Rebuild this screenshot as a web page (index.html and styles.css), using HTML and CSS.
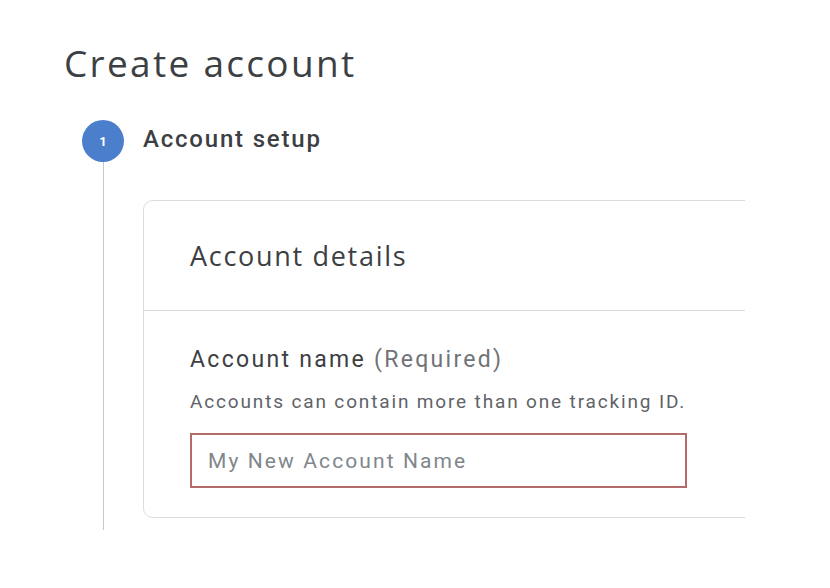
FILE: index.html
```html
<!DOCTYPE html>
<html lang="en">
<head>
<meta charset="utf-8">
<title>Create account</title>
<link rel="stylesheet" href="styles.css">
</head>
<body>
<main class="page">
  <h1 class="title">Create account</h1>
  <section class="step">
    <div class="rail">
      <div class="step-num">1</div>
      <div class="rail-line"></div>
    </div>
    <div class="step-body">
      <h2 class="step-label">Account setup</h2>
      <div class="card-clip">
        <div class="card">
          <div class="card-head">
            <h3 class="card-title">Account details</h3>
          </div>
          <div class="card-body">
            <label class="field-label" for="acct">Account name <span class="req">(Required)</span></label>
            <p class="field-help">Accounts can contain more than one tracking ID.</p>
            <input class="field-input" id="acct" type="text" placeholder="My New Account Name">
          </div>
        </div>
      </div>
    </div>
  </section>
</main>
</body>
</html>
```

FILE: styles.css
```css
* { box-sizing: border-box; }
html, body { margin: 0; padding: 0; background: #fff; }
body { font-family: Roboto, "Noto Sans", Arial, sans-serif; color: #3c4043; }

.page {
  padding: 38px 0 0 64px;
}

.title {
  margin: 0;
  font-family: "Open Sans", Roboto, sans-serif;
  font-weight: 400;
  font-size: 37px;
  line-height: 50px;
  letter-spacing: 2.3px;
  color: #3c4043;
}

.step {
  display: flex;
  margin-top: 32px;
  margin-left: 18px;
  gap: 19px;
}

.rail {
  width: 42px;
  display: flex;
  flex-direction: column;
  align-items: center;
}

.step-num {
  width: 42px;
  height: 42px;
  border-radius: 50%;
  background: #4b7fcb;
  color: #fff;
  font-size: 13px;
  font-weight: 700;
  display: flex;
  align-items: center;
  justify-content: center;
}

.rail-line {
  flex: 1;
  width: 1px;
  background: #c8c8c8;
}

.step-body {
  flex: 1;
  padding-bottom: 12px;
}

.step-label {
  margin: 0;
  font-size: 24px;
  font-weight: 500;
  line-height: 38px;
  letter-spacing: 1.8px;
  color: #3c4043;
}

.card-clip {
  margin-top: 42px;
  width: 602px;
  overflow: hidden;
}

.card {
  width: 760px;
  border: 1px solid #dadce0;
  border-radius: 10px;
}

.card-head {
  height: 110px;
  display: flex;
  align-items: center;
  padding-left: 46px;
  border-bottom: 1px solid #dadce0;
}

.card-title {
  margin: 0;
  font-family: "Open Sans", Roboto, sans-serif;
  font-weight: 400;
  font-size: 27px;
  letter-spacing: 1.7px;
  color: #3c4043;
}

.card-body {
  padding: 34px 0 29px 46px;
  display: flex;
  flex-direction: column;
  align-items: flex-start;
}

.field-label {
  font-size: 23px;
  line-height: 30px;
  letter-spacing: 2.3px;
  color: #3c4043;
}

.req { color: #6f7377; }

.field-help {
  margin: 14px 0 0;
  font-size: 19px;
  line-height: 26px;
  letter-spacing: 1.85px;
  color: #5f6368;
}

.field-input {
  margin-top: 18px;
  width: 497px;
  height: 55px;
  border: 2px solid #b56a6a;
  padding: 0 16px;
  font-family: Roboto, sans-serif;
  font-size: 21px;
  letter-spacing: 2.1px;
  color: #3c4043;
  outline: none;
}

.field-input::placeholder { color: #80868b; }
```
